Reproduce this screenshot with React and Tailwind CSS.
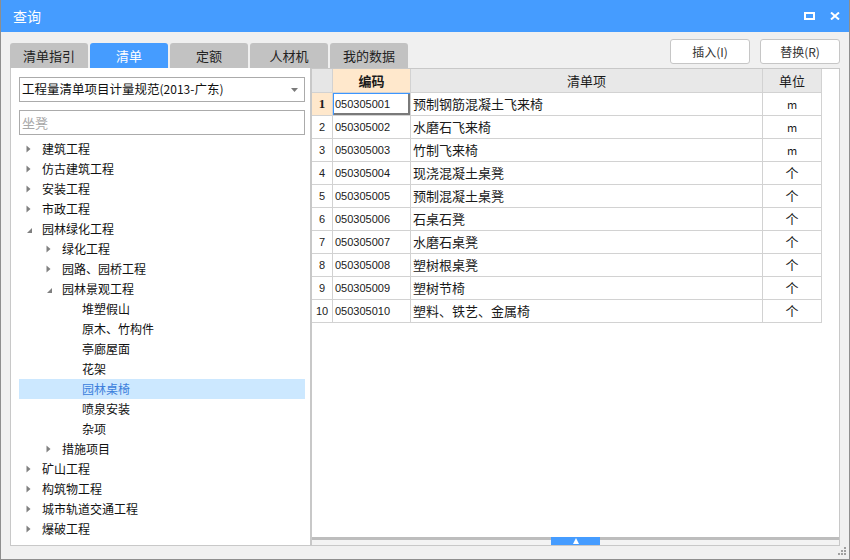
import React from 'react';

const tabs = ['清单指引', '清单', '定额', '人材机', '我的数据'];

const tree = [
    { label: '建筑工程', level: 0, arrow: 'right' },
    { label: '仿古建筑工程', level: 0, arrow: 'right' },
    { label: '安装工程', level: 0, arrow: 'right' },
    { label: '市政工程', level: 0, arrow: 'right' },
    { label: '园林绿化工程', level: 0, arrow: 'down' },
    { label: '绿化工程', level: 1, arrow: 'right' },
    { label: '园路、园桥工程', level: 1, arrow: 'right' },
    { label: '园林景观工程', level: 1, arrow: 'down' },
    { label: '堆塑假山', level: 2 },
    { label: '原木、竹构件', level: 2 },
    { label: '亭廊屋面', level: 2 },
    { label: '花架', level: 2 },
    { label: '园林桌椅', level: 2, selected: true },
    { label: '喷泉安装', level: 2 },
    { label: '杂项', level: 2 },
    { label: '措施项目', level: 1, arrow: 'right' },
    { label: '矿山工程', level: 0, arrow: 'right' },
    { label: '构筑物工程', level: 0, arrow: 'right' },
    { label: '城市轨道交通工程', level: 0, arrow: 'right' },
    { label: '爆破工程', level: 0, arrow: 'right' },
];

const rows = [
    ['050305001', '预制钢筋混凝土飞来椅', 'm'],
    ['050305002', '水磨石飞来椅', 'm'],
    ['050305003', '竹制飞来椅', 'm'],
    ['050305004', '现浇混凝土桌凳', '个'],
    ['050305005', '预制混凝土桌凳', '个'],
    ['050305006', '石桌石凳', '个'],
    ['050305007', '水磨石桌凳', '个'],
    ['050305008', '塑树根桌凳', '个'],
    ['050305009', '塑树节椅', '个'],
    ['050305010', '塑料、铁艺、金属椅', '个'],
];

function Arrow({ dir }) {
    if (dir === 'down') {
        return (
            <svg width="7" height="7" viewBox="0 0 7 7" className="mt-[2px]">
                <polygon points="6,1 6,6 1,6" fill="#808080" />
            </svg>
        );
    }
    return (
        <svg width="5" height="8" viewBox="0 0 5 8">
            <polygon points="0.5,0.5 4.5,4 0.5,7.5" fill="#808080" />
        </svg>
    );
}

export default function App() {
    return (
        <div className="w-[850px] h-[560px] flex flex-col bg-[#f0f0f0] border-x border-b border-[#8e8e8e] font-['Noto_Sans_CJK_SC',sans-serif] text-[#1a1a1a] overflow-hidden">
            {/* title bar */}
            <div className="h-[32px] shrink-0 bg-[#459cff] flex items-center justify-between pl-[12px] pr-[9px]">
                <span className="text-[14px] text-white">查询</span>
                <div className="flex items-center gap-[15px]">
                    <svg width="11" height="8" viewBox="0 0 11 8">
                        <rect x="1" y="1" width="9" height="6" fill="none" stroke="white" strokeWidth="2" />
                    </svg>
                    <svg width="10" height="8" viewBox="0 0 10 8">
                        <path d="M1 0.5 L9 7.5 M9 0.5 L1 7.5" stroke="white" strokeWidth="2" />
                    </svg>
                </div>
            </div>

            {/* tabs + buttons */}
            <div className="h-[36px] shrink-0 flex justify-between px-[9px]">
                <div className="flex gap-[2px] self-end">
                    {tabs.map((t, i) => (
                        <div
                            key={t}
                            className={
                                i === 1
                                    ? 'w-[78px] h-[25px] rounded-t-[3px] bg-[#459cff] text-white text-[13px] flex items-center justify-center'
                                    : 'w-[78px] h-[25px] rounded-t-[3px] bg-[#c2c2c2] text-[#222] text-[13px] flex items-center justify-center'
                            }
                        >
                            {t}
                        </div>
                    ))}
                </div>
                <div className="flex gap-[10px] mt-[7px] self-start">
                    <button className="w-[80px] h-[25px] bg-white border border-[#c6c6c6] rounded-[3px] text-[12px] text-[#333]">插入(I)</button>
                    <button className="w-[80px] h-[25px] bg-white border border-[#c6c6c6] rounded-[3px] text-[12px] text-[#333]">替换(R)</button>
                </div>
            </div>

            {/* main */}
            <div className="h-[478px] shrink-0 flex px-[9px]">
                {/* left panel */}
                <div className="w-[301px] bg-white border-x border-b border-[#c8c8c8] pl-[8px] pr-[5px] pt-[9px] flex flex-col">
                    <div className="h-[25px] border border-[#ababab] flex items-center justify-between pl-[2px] pr-[6px]">
                        <span className="text-[12.5px] text-[#111]">工程量清单项目计量规范<span className="text-[12px]">(2013-</span>广东<span className="text-[12px]">)</span></span>
                        <svg width="7" height="4" viewBox="0 0 7 4">
                            <polygon points="0,0 7,0 3.5,4" fill="#7a7a7a" />
                        </svg>
                    </div>
                    <div className="h-[25px] mt-[8px] border border-[#ababab] flex items-center pl-[2px]">
                        <span className="text-[13px] text-[#a8a8a8]">坐凳</span>
                    </div>
                    <div className="mt-[4px] flex flex-col">
                        {tree.map((n) => (
                            <div
                                key={n.label}
                                className={n.selected ? 'h-[20px] flex items-center bg-[#cce8ff]' : 'h-[20px] flex items-center'}
                            >
                                <div
                                    className={
                                        n.level === 0 ? 'w-[23px] shrink-0 pl-[7px] flex items-center' :
                                        n.level === 1 ? 'w-[43px] shrink-0 pl-[27px] flex items-center' :
                                        'w-[63px] shrink-0'
                                    }
                                >
                                    {n.arrow && <Arrow dir={n.arrow} />}
                                </div>
                                <span className={n.selected ? 'text-[12px] text-[#3d7fdc]' : 'text-[12px] text-[#111]'}>{n.label}</span>
                            </div>
                        ))}
                    </div>
                </div>

                {/* right panel */}
                <div className="w-[529px] bg-white border border-[#c8c8c8] flex flex-col">
                    <div className="flex flex-col w-[510px] border-r border-[#d2d2d2]">
                        <div className="h-[24px] flex border-b border-[#d2d2d2] text-[13px]">
                            <div className="w-[21px] border-r border-[#d2d2d2] bg-[#e6e6e6]"></div>
                            <div className="w-[78px] border-r border-[#d2d2d2] bg-[#ffe8cc] font-bold flex items-center justify-center">编码</div>
                            <div className="w-[352px] border-r border-[#d2d2d2] bg-[#e8e8e8] flex items-center justify-center">清单项</div>
                            <div className="w-[58px] bg-[#e8e8e8] flex items-center justify-center">单位</div>
                        </div>
                        {rows.map((r, i) => (
                            <div key={r[0]} className="h-[23px] flex border-b border-[#d2d2d2]">
                                <div
                                    className={
                                        i === 0
                                            ? "w-[21px] border-r border-[#d2d2d2] bg-[#ffe8cc] flex items-center justify-center font-['Liberation_Serif',serif] font-bold text-[13px]"
                                            : "w-[21px] border-r border-[#d2d2d2] flex items-center justify-center font-['Liberation_Sans',sans-serif] text-[11px] text-[#222]"
                                    }
                                >
                                    {i + 1}
                                </div>
                                <div
                                    className={
                                        i === 0
                                            ? "w-[78px] border-r border-[#d2d2d2] flex items-center pl-[2px] font-['Liberation_Sans',sans-serif] text-[11px] shadow-[inset_1px_1px_0_#3c96ff,inset_-2px_-2px_0_#7a7a7a]"
                                            : "w-[78px] border-r border-[#d2d2d2] flex items-center pl-[2px] font-['Liberation_Sans',sans-serif] text-[11px]"
                                    }
                                >
                                    {r[0]}
                                </div>
                                <div className="w-[352px] border-r border-[#d2d2d2] flex items-center pl-[2px] text-[13px]">{r[1]}</div>
                                <div className={r[2] === 'm' ? 'w-[58px] flex items-center justify-center text-[11px]' : 'w-[58px] flex items-center justify-center text-[13px]'}>
                                    {r[2]}
                                </div>
                            </div>
                        ))}
                    </div>
                    <div className="flex-1"></div>
                    <div className="h-[8px] shrink-0 flex justify-center bg-[linear-gradient(to_bottom,#bdbdbd_3px,#f3f3f3_3px)]">
                        <div className="w-[49px] h-full bg-[#459cff] flex items-center justify-center">
                            <svg width="6" height="6" viewBox="0 0 6 6">
                                <polygon points="3,0 6,6 0,6" fill="white" />
                            </svg>
                        </div>
                    </div>
                </div>
            </div>

            {/* bottom strip with resize grip */}
            <div className="flex-1 flex justify-end items-end pr-[2px] pb-[3px]">
                <svg width="9" height="9" viewBox="0 0 9 9">
                    <rect x="6" y="0" width="2" height="2" fill="#a0a0a0" />
                    <rect x="3" y="3" width="2" height="2" fill="#a0a0a0" />
                    <rect x="6" y="3" width="2" height="2" fill="#a0a0a0" />
                    <rect x="0" y="6" width="2" height="2" fill="#a0a0a0" />
                    <rect x="3" y="6" width="2" height="2" fill="#a0a0a0" />
                    <rect x="6" y="6" width="2" height="2" fill="#a0a0a0" />
                </svg>
            </div>
        </div>
    );
}
